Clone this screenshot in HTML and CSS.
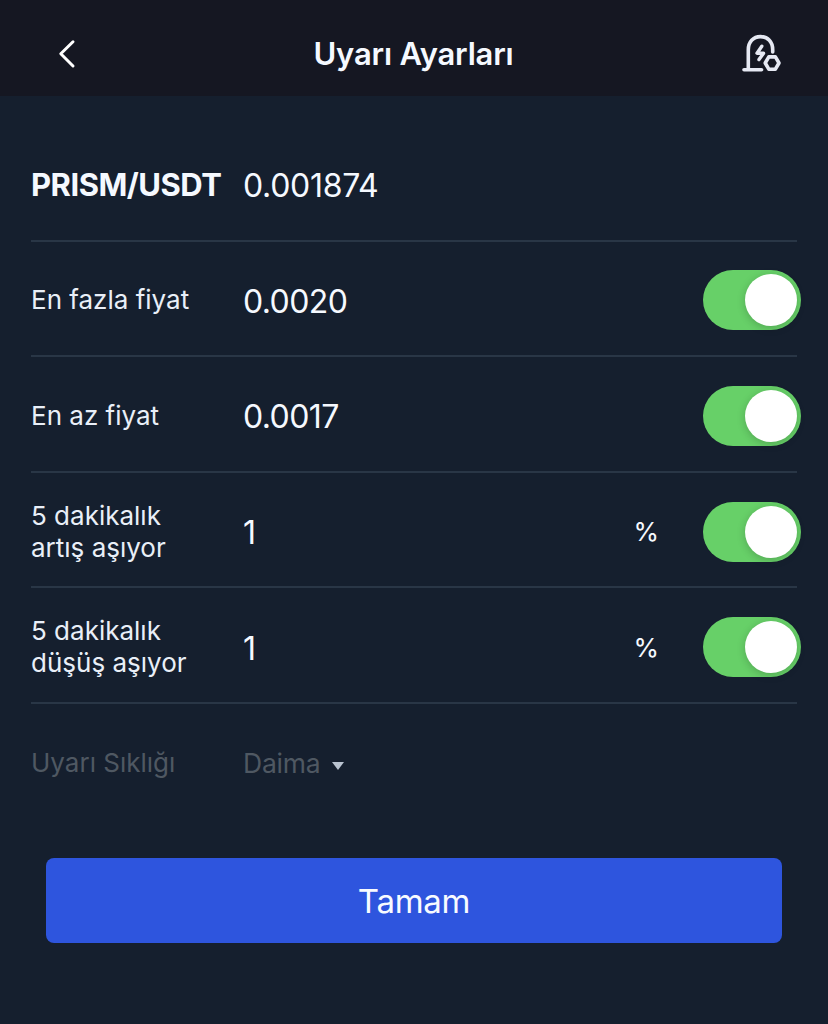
FILE: index.html
```html
<!DOCTYPE html>
<html lang="tr">

<head>
    <meta charset="UTF-8">
    <title>Uyarı Ayarları</title>
    <link rel="stylesheet" href="styles.css">
</head>

<body>
    <header class="header">
        <button class="icon-btn" aria-label="Geri">
            <svg class="back-icon" width="20" height="32" viewBox="0 0 20 32">
                <path d="M17 3.8L4.8 15.8L17 28" />
            </svg>
        </button>
        <h1>Uyarı Ayarları</h1>
        <button class="icon-btn" aria-label="Uyarılar">
            <svg class="alert-icon" width="42" height="42" viewBox="0 0 42 42">
                <path d="M3 36.7H20.5" />
                <path d="M7.3 36V16.7C7.3 9 12.2 3.6 19.5 3.6S31.7 9 31.7 16.7V19" />
                <path class="bolt" d="M20.8 13.2L16 20.2H22.6L18 26.6" />
                <path d="M27.8 23.9H34.4L38 30L34.4 36.2H27.8L24.2 30Z" />
            </svg>
        </button>
    </header>

    <main class="settings">
        <div class="row">
            <span class="pair">PRISM/USDT</span>
            <span class="value price">0.001874</span>
        </div>
        <div class="row">
            <span class="label">En fazla fiyat</span>
            <span class="value">0.0020</span>
            <button class="toggle" role="switch" aria-checked="true"></button>
        </div>
        <div class="row">
            <span class="label">En az fiyat</span>
            <span class="value">0.0017</span>
            <button class="toggle" role="switch" aria-checked="true"></button>
        </div>
        <div class="row">
            <span class="label">5 dakikalık<br>artış aşıyor</span>
            <span class="value">1</span>
            <span class="unit">%</span>
            <button class="toggle" role="switch" aria-checked="true"></button>
        </div>
        <div class="row">
            <span class="label">5 dakikalık<br>düşüş aşıyor</span>
            <span class="value">1</span>
            <span class="unit">%</span>
            <button class="toggle" role="switch" aria-checked="true"></button>
        </div>
        <div class="row disabled">
            <span class="label">Uyarı Sıklığı</span>
            <span class="select">Daima <i class="caret"></i></span>
        </div>
    </main>

    <button class="submit">Tamam</button>
</body>

</html>
```
FILE: styles.css
```css
* {
    box-sizing: border-box;
}

body {
    margin: 0;
    min-height: 1024px;
    background-color: #151f2e;
    color: #f5f9ff;
    font-family: Inter, "Noto Sans", sans-serif;
}

button {
    border: none;
    padding: 0;
    background: none;
    font-family: inherit;
    cursor: pointer;
}

svg {
    display: block;
    fill: none;
    stroke: #ffffff;
    stroke-width: 3;
    stroke-linecap: round;
    stroke-linejoin: round;
}

/* Top bar */
.header {
    display: flex;
    align-items: center;
    justify-content: space-between;
    height: 96px;
    padding: 12px 45px 0 47px;
    background-color: #151722;
}

.header h1 {
    margin: 0 3px 0 0;
    font-size: 31px;
    font-weight: 600;
    line-height: 40px;
    letter-spacing: -0.2px;
}

.icon-btn {
    display: flex;
    width: 42px;
}

.back-icon {
    margin-left: 9px;
}

.alert-icon {
    stroke: #e6e9f3;
    stroke-width: 3.6;
}

.alert-icon .bolt {
    stroke-width: 3.4;
}

/* Setting rows */
.settings {
    padding: 30px 31px 0;
}

.row {
    display: grid;
    grid-template-columns: 212px 1fr auto 98px;
    align-items: center;
    height: 115.6px;
    margin-right: -4px;
    padding-top: 2px;
    background: linear-gradient(#293646, #293646) left bottom / 766px 2px no-repeat;
}

.label {
    font-size: 26px;
    line-height: 32px;
    color: #e9eff8;
}

.pair {
    font-size: 31px;
    font-weight: 700;
    letter-spacing: -0.5px;
    white-space: nowrap;
}

.value {
    padding-top: 2px;
    font-size: 32px;
    letter-spacing: -0.6px;
}

.price {
    letter-spacing: -0.3px;
}

.unit {
    margin-right: 44px;
    font-size: 26px;
}

.toggle {
    grid-column: 4;
    display: flex;
    justify-content: flex-end;
    align-items: center;
    width: 98px;
    height: 60px;
    padding-right: 4px;
    border-radius: 30px;
    background-color: #67d068;
}

.toggle::after {
    content: "";
    width: 52px;
    height: 52px;
    border-radius: 50%;
    background-color: #ffffff;
    box-shadow: 0 2px 8px rgba(0, 0, 0, 0.2);
}

.disabled {
    background: none;
}

.disabled .label,
.select {
    color: #4f5862;
}

.select {
    display: flex;
    align-items: center;
    font-size: 26.5px;
    letter-spacing: -0.2px;
}

.caret {
    margin: 6px 0 0 11px;
    border: 6px solid transparent;
    border-top: 8px solid #b9c3d0;
    border-bottom: 0;
}

.submit {
    display: block;
    width: 736px;
    height: 85px;
    margin: 38px 0 0 46px;
    padding-top: 2px;
    border-radius: 8px;
    background-color: #2e55de;
    color: #f8fbff;
    font-size: 33px;
    letter-spacing: -0.3px;
}
```
